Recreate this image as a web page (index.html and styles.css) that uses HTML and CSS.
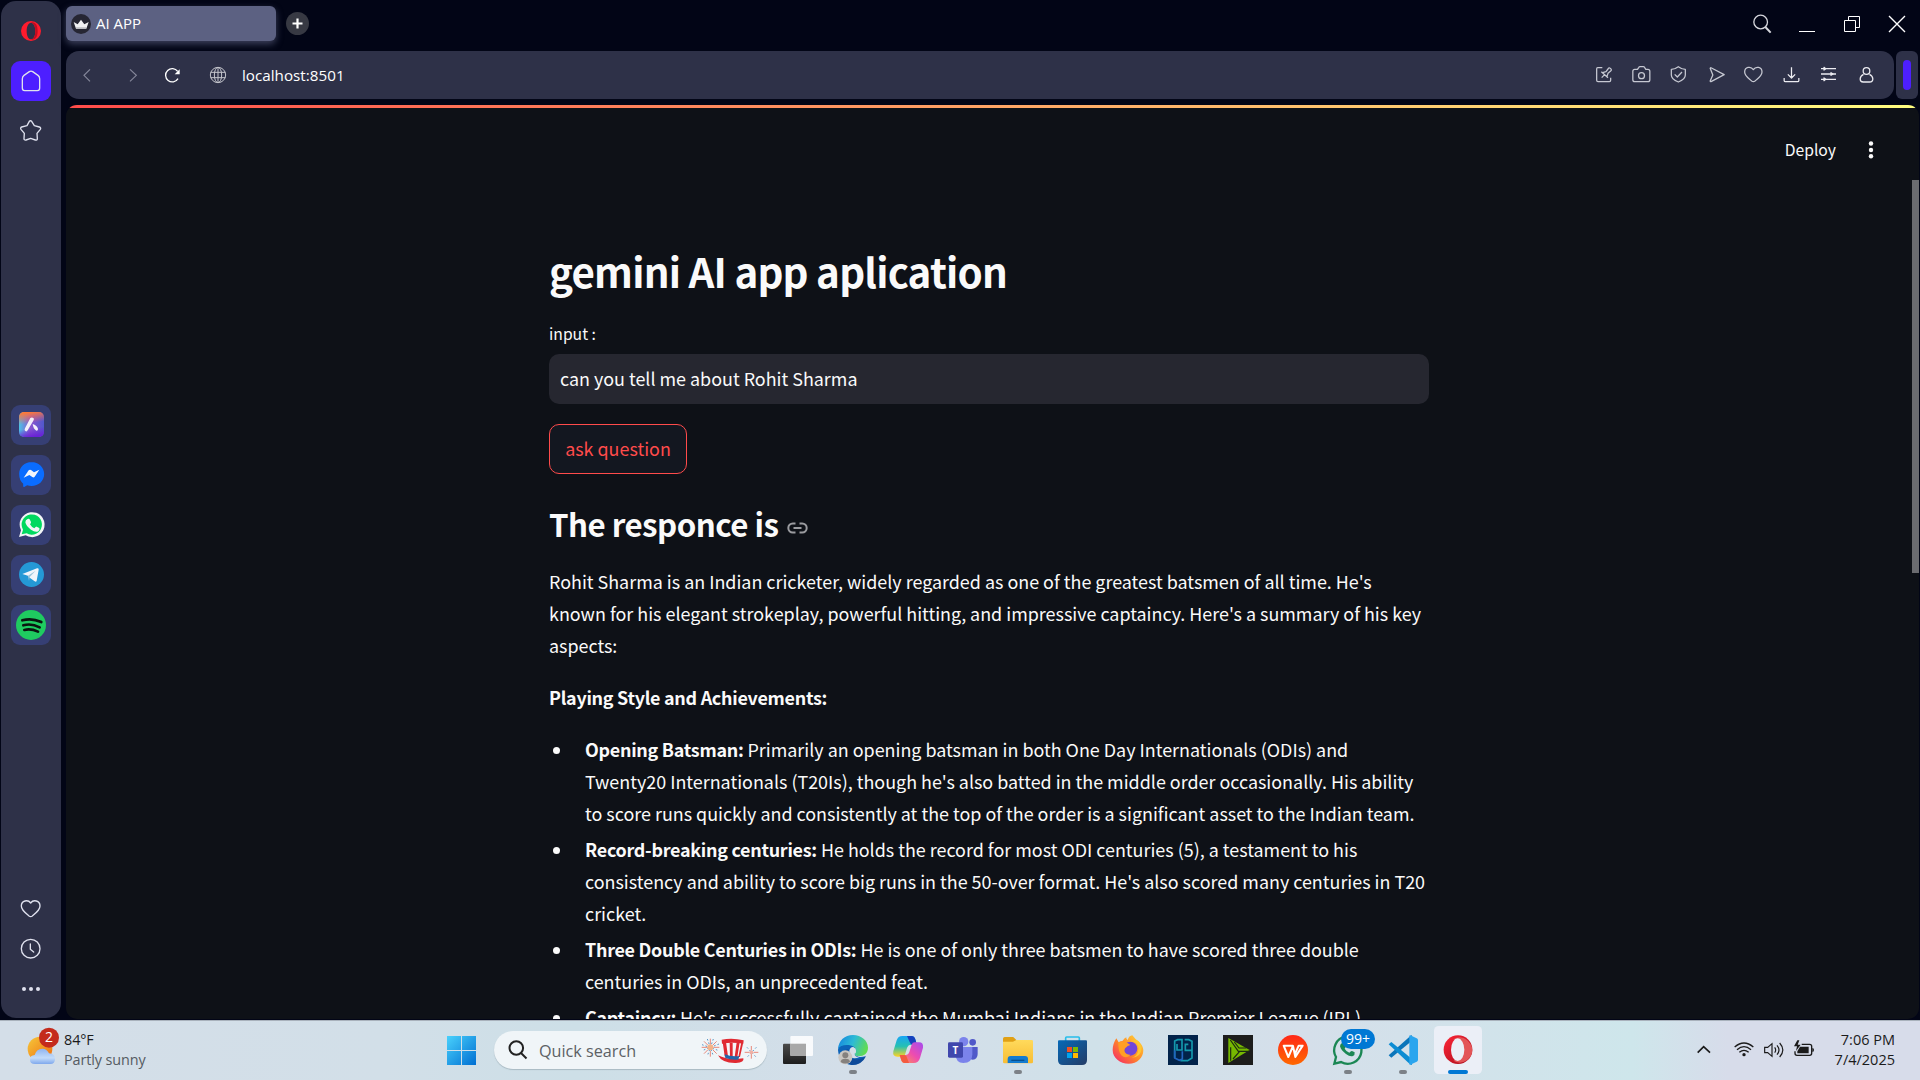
FILE: index.html
```html
<!DOCTYPE html>
<html lang="en">
<head>
<meta charset="utf-8">
<title>AI APP</title>
<link rel="stylesheet" href="styles.css">
</head>
<body>
<div class="browser">
  <nav class="sidebar">
    <svg class="side-icon" viewBox="33 33 120 120"><path fill="#ff1b2d" fill-rule="evenodd" d="M93 63a30 30 0 1 0 0 60a30 30 0 1 0 0-60zM93 68c8 0 13 11 13 25s-5 25-13 25s-13-11-13-25s5-25 13-25z"/><path fill="#c00d20" d="M93 68c9-4 20 3 20 25s-11 29-20 25c8 0 13-11 13-25s-5-25-13-25z"/></svg>
    <svg class="side-icon home" viewBox="33 183 120 120"><path d="M67 236c0-5 2-8 5-10l16-11c3-2 7-2 10 0l16 11c3 2 5 5 5 10v28c0 5-2 8-7 8H74c-5 0-7-3-7-8z"/></svg>
    <svg class="side-icon" viewBox="33 333 120 120"><path d="M88 364c2-2 5-2 7 0l8 13l15 4c4 1 5 4 3 7l-10 12l1 16c0 4-3 5-6 4l-14-5l-14 5c-4 1-6-1-6-4l1-16l-10-12c-2-3-1-6 2-7l16-4z"/></svg>
    <div class="side-apps">
      <svg class="side-icon tile" viewBox="33 45 120 120"><defs><linearGradient id="aria" x1="0" y1="0" x2="1" y2="0"><stop offset="0" stop-color="#4cc3e6"/><stop offset=".45" stop-color="#8a55d0"/><stop offset="1" stop-color="#5058cc"/></linearGradient><linearGradient id="ariatop" x1=".4" y1="0" x2=".55" y2="1"><stop offset="0" stop-color="#ff7a35"/><stop offset=".45" stop-color="#ff6a50" stop-opacity="0"/><stop offset=".65" stop-color="#6a20d8" stop-opacity="0"/><stop offset="1" stop-color="#6a20d8"/></linearGradient></defs><rect class="solid" x="57" y="66" width="75" height="75" rx="15" fill="url(#aria)"/><rect class="solid" x="57" y="66" width="75" height="75" rx="15" fill="url(#ariatop)"/><path class="solid" fill="#f4f0fa" d="M91 84q5-4 10 1q2 3-1 7l-17 29q-3 5-7 2q-4-2-1-8zM98 102q12 3 16 14q1 6-5 6q-9-5-11-20z"/></svg>
      <svg class="side-icon tile" viewBox="33 45 120 120"><path class="solid" fill="#0a6cff" d="M94.500 66c21 0 38 15 38 36s-17 36-38 36q-7 0-13-2l-9 5q-3 1-3-3v-7q-12-10-12-29c0-21 16-36 37.500-36z"/><path class="solid" fill="#f2f5fb" d="M71 113l15-22q3-3 7-1l9 7l16-8l-14 21q-3 4-7 1l-9-6z"/></svg>
      <svg class="side-icon tile" viewBox="33 45 120 120"><path class="solid" fill="#f2f5f7" d="M57 141l6-20a37.500 37.500 0 1 1 14 15z"/><path class="solid" fill="#00d95f" d="M65 133l4-14a30.500 30.500 0 1 1 11 11z"/><path class="solid" fill="#f2f5f7" d="M83 87q5-2 7 3l3 6q1 3-3 7q5 9 13 12q5-6 7-5l8 4q2 8-6 11q-8 2-19-6q-15-11-17-22q0-7 7-10z"/></svg>
      <svg class="side-icon tile" viewBox="33 45 120 120"><circle class="solid" cx="94.500" cy="103.500" r="37.500" fill="#2499d6"/><path class="solid" fill="#f2f5fb" d="M67 102l44-17q6-2 5 4l-6 33q-1 5-6 2l-15-11l-5-6z"/><path class="solid" fill="#9fc6dc" d="M84 107l23-15l-18 19l-2 12z"/></svg>
      <svg class="side-icon tile" viewBox="33 45 120 120"><circle class="solid" cx="93" cy="105" r="45" fill="#1fcb60"/><path d="M67 91q28-8 57 5M70 106q24-7 49 6M73 120q20-5 41 5" stroke="#0a1510" stroke-width="8"/></svg>
    </div>
    <div class="side-tools">
      <svg class="side-icon" viewBox="33 26 120 120"><path d="M92 68c-8-11-28-8-28 9c0 11 8 17 23 30q5 4 10 0c15-13 23-19 23-30c0-17-20-20-28-9z"/></svg>
      <svg class="side-icon" viewBox="33 147 120 120"><circle cx="92" cy="206" r="28"/><path d="M91 192v16l10 8"/></svg>
      <svg class="side-icon" viewBox="33 267 120 120"><g fill="#dfe1ee" stroke="none"><circle cx="72" cy="327" r="6"/><circle cx="93" cy="327" r="6"/><circle cx="114" cy="327" r="6"/></g></svg>
    </div>
  </nav>

  <div class="window">
    <header class="tabs">
      <div class="tab"><svg viewBox="213 42 60 60"><circle cx="243" cy="72" r="30" fill="#262633"/><path fill="#f1f1f3" d="M221 66l12 7l10-14l10 14l13-7l-7 20h-31z"/><path fill="#bdbdc2" d="M228 82h31l-1 5h-29z"/></svg><span>AI APP</span></div>
      <svg class="new-tab" viewBox="0 0 23 23"><circle cx="11.500" cy="11.500" r="11.500" fill="#373943"/><path d="M11.500 6.500v10M6.500 11.500h10" stroke="#fff" stroke-width="2.200"/></svg>
      <div class="controls">
        <svg viewBox="540 0 135 144"><circle cx="602" cy="66" r="20.500"/><path d="M616 81l16 17" stroke-width="6"/></svg>
        <svg viewBox="675 0 135 144"><path stroke="#fff" d="M717 94.500h48"/></svg>
        <svg viewBox="810 0 135 144"><path stroke="#fff" d="M853.500 61.500h33v33h-33zM865.500 61v-11.500h33v33H887"/></svg>
        <svg viewBox="945 0 135 144"><path stroke="#fff" stroke-width="4" d="M987 48l48 48M1035 48l-48 48"/></svg>
      </div>
    </header>

    <div class="toolbar-row">
      <div class="toolbar">
        <svg class="nav-icon dim" viewBox="210 153 114 144"><path d="M270 208l-18 18l18 18"/></svg>
        <svg class="nav-icon dim forward" viewBox="345 153 114 144"><path d="M390 208l19 18l-19 18"/></svg>
        <svg class="nav-icon reload" viewBox="459 153 114 144"><path d="M534 236a20 20 0 1 1-1-22" stroke-width="4"/><path fill="#fff" stroke="none" d="M539 208v15h-15z"/></svg>
        <svg class="nav-icon globe" viewBox="597 153 114 144"><circle cx="654" cy="225" r="23"/><ellipse cx="654" cy="225" rx="11" ry="23"/><path d="M632 217h44M632 233h44M654 202v46"/></svg>
        <span class="address">localhost:8501</span>
        <div class="actions">
          <svg viewBox="75 153 112.5 144"><path d="M127 203h-14q-3 0-3 4v34q0 4 4 4h34q4 0 4-4v-8M125 233l9-9M124 215l20 18M128 218l10-3l6-8q3-6 7-2l1 1q4 4 0 7l-8 7l-3 9"/></svg>
          <svg viewBox="187.5 153 112.5 144"><path d="M217 214q0-6 6-6h8l4-6q1-2 4-2h9q3 0 4 2l4 6h6q6 0 6 6v25q0 6-6 6h-39q-6 0-6-6z"/><circle cx="243" cy="227" r="9"/></svg>
          <svg viewBox="300 153 112.5 144"><path d="M355 200q11 8 21 8v17q0 13-21 21q-21-8-21-21v-17q10 0 21-8zM344 223l8 8l14-15"/></svg>
          <svg viewBox="412.5 153 112.5 144"><path d="M449 205q0-3 4-1l38 20l-38 20q-4 2-4-1l8-18z"/></svg>
          <svg viewBox="525 153 112.5 144"><path d="M580 209c-8-12-26-8-26 7c0 12 12 19 21 27q5 4 10 0c9-8 21-15 21-27c0-15-18-19-26-7z"/></svg>
          <svg class="bright" viewBox="637.5 153 112.5 144"><path d="M693 202v31M682 223l11 11l11-11M671 234v8q0 3 4 3h36q4 0 4-3v-8"/></svg>
          <svg class="bright" viewBox="750 153 112.5 144"><path d="M783 206h45M783 222h45M783 238h45"/><path d="M792 202v8l5-4zM813 218v8l6-4zM792 234v8l5-4z" fill="#e5e5eb"/></svg>
          <svg class="bright" viewBox="862.5 153 112.5 144"><circle cx="918" cy="213" r="10"/><path d="M909 223q-10 5-10 14q0 9 9 9h19q10 0 10-9q0-9-10-14"/></svg>
        </div>
      </div>
      <div class="panel-toggle"><div class="panel-mark"></div></div>
    </div>

    <div class="page">
      <div class="decoration"></div>
      <div class="app-header"><span>Deploy</span><svg viewBox="0 0 6 20"><circle cx="3" cy="3.500" r="2.200"/><circle cx="3" cy="10" r="2.200"/><circle cx="3" cy="16.300" r="2.200"/></svg></div>
      <div class="scroll-thumb"></div>
      <main class="content">
        <h1>gemini AI app aplication</h1>
        <label class="label">input :</label>
        <div class="field">can you tell me about Rohit Sharma</div>
        <button class="ask">ask question</button>
        <h2><span>The responce is</span><svg viewBox="0 0 22 12"><path d="M8.500 1.500H5.800a4.500 4.500 0 0 0 0 9h2.700M12.500 1.500h2.700a4.500 4.500 0 0 1 0 9h-2.700M6.500 6h8"/></svg></h2>
        <p>Rohit Sharma is an Indian cricketer, widely regarded as one of the greatest batsmen of all time. He's<br>known for his elegant strokeplay, powerful hitting, and impressive captaincy. Here's a summary of his key<br>aspects:</p>
        <p><strong>Playing Style and Achievements:</strong></p>
        <ul>
          <li><strong>Opening Batsman:</strong> Primarily an opening batsman in both One Day Internationals (ODIs) and<br>Twenty20 Internationals (T20Is), though he's also batted in the middle order occasionally. His ability<br>to score runs quickly and consistently at the top of the order is a significant asset to the Indian team.</li>
          <li><strong>Record-breaking centuries:</strong> He holds the record for most ODI centuries (5), a testament to his<br>consistency and ability to score big runs in the 50-over format. He's also scored many centuries in T20<br>cricket.</li>
          <li><strong>Three Double Centuries in ODIs:</strong> He is one of only three batsmen to have scored three double<br>centuries in ODIs, an unprecedented feat.</li>
          <li><strong>Captaincy:</strong> He's successfully captained the Mumbai Indians in the Indian Premier League (IPL)</li>
        </ul>
      </main>
    </div>
  </div>
</div>

<footer class="taskbar">
  <div class="weather">
    <svg viewBox="78 438 105 120"><defs><linearGradient id="sun" x1="0" y1="0" x2="1" y2="1"><stop offset="0" stop-color="#f5c83a"/><stop offset="1" stop-color="#f06a10"/></linearGradient><linearGradient id="cloud" x1="0" y1="0" x2="0" y2="1"><stop offset="0" stop-color="#8fb4f0"/><stop offset=".6" stop-color="#c3dcfa"/><stop offset="1" stop-color="#7fa8ec"/></linearGradient></defs><circle cx="120" cy="507" r="37" fill="url(#sun)"/><path fill="url(#cloud)" d="M105 552q-15 0-15-13q0-13 14-14q6-19 23-19q14 0 20 14q18 2 18 17q0 15-14 15z"/><circle cx="147" cy="473" r="30" fill="#c42b1c"/></svg>
    <span class="count">2</span>
    <div class="forecast"><span>84°F</span><span class="muted">Partly sunny</span></div>
  </div>
  <div class="dock">
    <svg class="dock-icon start" viewBox="12 30 165 180"><defs><linearGradient id="win" x1="0" y1="0" x2="1" y2="1"><stop offset="0" stop-color="#49d1fc"/><stop offset="1" stop-color="#006fd2"/></linearGradient></defs><path fill="url(#win)" d="M51 78h42v42H51zM96 78h42v42H96zM51 123h42v42H51zM96 123h42v42H96z"/></svg>
    <div class="search">
      <svg class="lens" viewBox="0 0 20 20"><circle cx="8.300" cy="8" r="6.800"/><path d="M13 13l5.500 5.500"/></svg>
      <span>Quick search</span>
      <svg class="party" viewBox="812 78 180 84"><g fill="none" stroke-width="2.500"><path stroke="#e57261" d="M843 86v18M843 122v18M817 112h18M852 112h18M824 94l12 12M850 119l12 12M862 94l-12 12M836 119l-12 12M966 108v12M966 132v14M946 127h14M973 127h14"/><path stroke="#3a86bd" stroke-dasharray="5 6" d="M834 87l18 51M818 104l51 18M869 102l-51 20M852 87l-18 51M953 112l28 30M981 112l-28 30"/></g><circle cx="843" cy="112" r="9" fill="#f3b48a"/><circle cx="966" cy="127" r="6" fill="#efb0a5"/><path fill="#f5f5f7" d="M878 91q30-8 64 0l-12 58l-46-4z"/><path fill="#e02a32" d="M877 89q32-7 66 2l-1 10q-32-6-64 0zM880 97h10l6 42h-10zM901 97h9v44h-8zM922 97h9l-7 44h-8zM936 97h6l-10 44h-5zM866 136q30 16 76 9q4 12-22 14q-42 1-54-23z"/><path fill="#2465a8" d="M886 133q20 8 44 5l-3 11q-21 2-39-5z"/></svg>
    </div>
    <svg class="dock-icon" viewBox="0 30 165 180"><defs><linearGradient id="tv" x1="0" y1="0" x2="0" y2="1"><stop offset="0" stop-color="#4b4b4b"/><stop offset="1" stop-color="#1d1d1d"/></linearGradient></defs><rect x="39" y="101" width="69" height="61" rx="3" fill="url(#tv)"/><rect x="61" y="78" width="68" height="60" rx="3" fill="#fff" opacity=".85"/><path fill="#a8a8a8" d="M61 101h47v37H64q-3 0-3-3z"/></svg>
    <svg class="dock-icon" viewBox="165 30 165 180"><defs><linearGradient id="edge" x1="0" y1=".2" x2="1" y2=".5"><stop offset="0" stop-color="#1687df"/><stop offset=".5" stop-color="#2dbbd5"/><stop offset="1" stop-color="#61dc51"/></linearGradient></defs><path fill="#0d63b8" d="M204 120q2-26 40-26q20 4 10 36q4 16 33 9q-16 26-42 26q-38-4-41-45z"/><path fill="#0f4b9b" d="M235 118q-2 32 28 30q14-1 25-9q-13 27-43 26q-30-8-28-32q3-13 18-15z"/><path fill="url(#edge)" d="M204 117c2-26 20-42 45-42s45 17 45 38c0 18-13 25-27 25q-14 0-13-6q4-3 4-10q0-13-22-17q-24-2-32 12z"/><path fill="#d4dfe8" d="M238 122q3-12 12-11q8 4 8 11q0 5-4 9q0 10 14 10q-20 10-28-5q-3-7-2-14z"/><circle cx="226" cy="142" r="21" fill="#c9c6c2"/><circle cx="226" cy="136" r="9" fill="#85817e"/><path fill="#85817e" d="M212 156q0-10 14-10t14 10q-14 9-28 0z"/><rect class="running" x="237" y="180" width="24" height="12" rx="6"/></svg>
    <svg class="dock-icon" viewBox="330 30 165 180"><defs><linearGradient id="cpa" x1="0" y1="0" x2="0" y2="1"><stop offset="0" stop-color="#18a5f5"/><stop offset=".5" stop-color="#24c0b3"/><stop offset="1" stop-color="#ffd423"/></linearGradient><linearGradient id="cpb" x1="1" y1="0" x2="0" y2="1"><stop offset="0" stop-color="#a44cf0"/><stop offset=".5" stop-color="#ed4cb0"/><stop offset="1" stop-color="#ff9c4a"/></linearGradient></defs><path fill="url(#cpa)" d="M397 78h27q10 0 13 13l4 13h-17q-10 0-13 10l-6 20q-2 6-9 6h-14q-15 0-12-16l10-33q4-13 17-13z"/><path fill="#1641bd" d="M411 78h14q9 0 12 13l3 13h-13q-5 0-8-8z"/><path fill="url(#cpb)" d="M431 159h-27q-10 0-11-11l-4-13h17q9 0 12-9l7-22q2-7 9-7h13q14 0 12 16l-9 31q-4 15-19 15z"/><path fill="#f35b40" d="M417 159h-13q-8 0-11-11l-4-13h14q7 0 8 8z"/></svg>
    <svg class="dock-icon" viewBox="495 30 165 180"><circle cx="581" cy="95" r="14" fill="#7b83eb"/><circle cx="608" cy="97" r="10" fill="#5059c9"/><path fill="#5059c9" d="M592 111h31v21q0 16-15 17q-9 0-16-7z"/><path fill="#7b83eb" d="M557 111h50v22q0 26-27 26q-23 0-23-26z"/><rect x="534" y="97" width="45" height="46" rx="4" fill="#4047ad"/><text class="teams-letter" x="556.500" y="132" text-anchor="middle">T</text></svg>
    <svg class="dock-icon" viewBox="660 30 165 180"><defs><linearGradient id="folder" x1="0" y1="0" x2="0" y2="1"><stop offset="0" stop-color="#ffda5c"/><stop offset="1" stop-color="#f8bd34"/></linearGradient></defs><path fill="#e0a015" d="M699 86q0-5 5-5h24q3 0 5 3l6 6h45v20h-85z"/><path fill="url(#folder)" d="M699 95h30l10-5h46q4 0 4 4v62q0 4-4 4h-82q-4 0-4-4z"/><path fill="#137bd0" d="M713 159v-12q0-9 9-9h43q9 0 9 9v12z"/><path d="M724 151h39" stroke="#07508f" stroke-width="4"/><rect class="running" x="732" y="180" width="24" height="12" rx="6"/></svg>
    <svg class="dock-icon" viewBox="825 30 165 180"><defs><linearGradient id="store" x1="0" y1="0" x2="1" y2="1"><stop offset="0" stop-color="#0669b8"/><stop offset="1" stop-color="#243c66"/></linearGradient></defs><path d="M887 95V84q0-3 3-3h35q3 0 3 3v11" fill="none" stroke="#27bdea" stroke-width="5"/><path fill="url(#store)" d="M864 94q0-3 3-3h81q3 0 3 3v56q0 15-15 15h-57q-15 0-15-15z"/><path fill="#f25022" d="M891 111h15v15h-15z"/><path fill="#7fba00" d="M909 111h15v15h-15z"/><path fill="#00a4ef" d="M891 129h15v15h-15z"/><path fill="#ffb900" d="M909 129h15v15h-15z"/></svg>
    <svg class="dock-icon" viewBox="993 31 165 180"><defs><linearGradient id="fox" x1="1" y1="0" x2="0" y2="1"><stop offset="0" stop-color="#ffdc3e"/><stop offset=".5" stop-color="#ff8a27"/><stop offset="1" stop-color="#f41c70"/></linearGradient></defs><path fill="url(#fox)" d="M1042 86l7 12q5-4 11-4q8-10 12-11q-1 5 4 8q4-13 14-14q10 14 20 19q12 12 13 25c0 24-18 41-44 41s-48-17-48-41q0-18 11-35z"/><circle cx="1084" cy="117" r="21" fill="#7246d8"/><path fill="#ff9f24" d="M1048 98q13-3 24 0l12 8q-10 2-12 7q-7 4-5 13q5 10 18 9q-15 14-28 2q-10-12-9-39z"/><path fill="#ffc72e" d="M1080 95q25-4 29 20q-2 26-22 29q30-1 31-30q-4-16-15-23z"/></svg>
    <svg class="dock-icon" viewBox="75 30 165 180"><path fill="#02234a" d="M114 75h90v90h-90z"/><g fill="none" stroke="#1499ad" stroke-width="5"><path d="M134 143V93l9-4h13v31h-15v-18M164 89h12l10 5v50l-13 8h-22M186 121h-20v-18h9" /><path stroke="#2165bf" d="M134 121v23l14 7l9-4v-23"/></g></svg>
    <svg class="dock-icon" viewBox="240 30 165 180"><path fill="#1d1d1c" d="M279 75h90v90h-90z"/><path fill="#76b900" d="M295 84l64 36l-64 39z"/><path d="M301 90l24 34h32M313 96l14 18h22M302 112v40M309 147l20-23" stroke="#1d2b12" stroke-width="3.500" fill="none"/></svg>
    <svg class="dock-icon" viewBox="405 30 165 180"><defs><linearGradient id="wps" x1="0" y1="0" x2="0" y2="1"><stop offset="0" stop-color="#ff2818"/><stop offset="1" stop-color="#ff6800"/></linearGradient></defs><circle cx="489" cy="120" r="45" fill="url(#wps)"/><path d="M489 107h-28l14 34l14-33l7 33l22-34h-12l-11 25" fill="none" stroke="#fff" stroke-width="6" stroke-linejoin="round"/></svg>
    <div class="badged">
      <svg class="dock-icon" viewBox="570 30 165 180"><path fill="none" stroke="#1b8754" stroke-width="7" d="M613 161l5-20a41 41 0 1 1 15 15z"/><path fill="#1b8754" d="M637 98q5-2 7 3l3 8q1 3-3 7q5 9 14 12q5-6 8-5l8 4q1 8-5 11q-9 3-21-6q-15-11-18-23q0-7 7-11z"/><rect class="running" x="642" y="180" width="24" height="12" rx="6"/></svg>
      <span class="badge">99+</span>
    </div>
    <svg class="dock-icon" viewBox="735 30 165 180"><path fill="#0a75ba" d="M776 136l8 7l62-51V76l-4 1z"/><path fill="#0b8cd3" d="M776 103l8-7l62 51v18l-6-2z"/><path fill="#2aa5ee" d="M841 76l19 9q4 2 4 6v58q0 4-4 6l-19 9q-3 1-3-3V79q0-4 3-3z"/><rect class="running" x="807" y="180" width="24" height="12" rx="6"/></svg>
    <svg class="dock-icon" viewBox="900 30 165 180"><defs><linearGradient id="opera" x1="0" y1="0" x2="1" y2="1"><stop offset="0" stop-color="#ff2638"/><stop offset="1" stop-color="#a40b1a"/></linearGradient></defs><rect x="912" y="48" width="144" height="144" rx="14" fill="#ebeff7"/><circle cx="984" cy="119" r="43" fill="url(#opera)"/><path fill="#e35457" d="M969 88q24-14 42 2q16 14 16 30q0 18-16 31q-20 14-41 1q28-8 28-32q0-25-29-32z"/><ellipse cx="983" cy="119" rx="20" ry="34" fill="#ebeff7"/><rect x="954" y="180" width="60" height="12" rx="6" fill="#0078d4"/></svg>
  </div>
  <div class="tray">
    <svg class="tray-icons" viewBox="90 75 390 90"><path d="M113 128l18-18l19 18" stroke-width="5"/><path d="M224 111q28-24 56 0M231 119q21-18 42 0M238 127q14-12 28 0" stroke-width="4"/><circle cx="252" cy="134" r="5" fill="#1b1b1b" stroke="none"/><path d="M314 112h9l13-11v38l-13-11h-9zM344 112q6 8 0 16M351 106q12 14 0 28M359 99q19 21 0 42" stroke-width="3.500"/><path d="M425 103h24q6 0 6 6v21q0 6-6 6h-38q-6 0-6-6v-6" stroke-width="4"/><path fill="#1b1b1b" stroke="none" d="M420 110h26v20h-34v-6zM457 114q5 0 5 6t-5 6zM412 91l-10 18h9l-3 14l14-19h-9l5-13z"/></svg>
    <div class="clock"><span>7:06 PM</span><span>7/4/2025</span></div>
  </div>
</footer>
</body>
</html>
```
FILE: styles.css
```css
* { box-sizing: border-box; }
body { margin: 0; width: 1920px; height: 1080px; overflow: hidden; background: #020516; font-family: "Open Sans", "Noto Sans", sans-serif; display: flex; flex-direction: column; }
svg { display: block; flex: none; }
.browser { height: 1020px; display: flex; gap: 5px; padding-left: 1px; overflow: hidden; }

.sidebar { width: 60px; height: 1017px; margin-top: 1px; border-radius: 15px; background: #2e3148; padding: 10px 10px 9px; display: flex; flex-direction: column; gap: 10px; }
.side-icon { width: 40px; height: 40px; fill: none; stroke: #dfe1ee; stroke-width: 4; stroke-linecap: round; stroke-linejoin: round; }
.sidebar > .side-icon:first-child, .side-icon .solid { stroke: none; }
.home { background: #4d1fff; border-radius: 9px; }
.tile { background: #363f74; border-radius: 9px; }
.side-apps { margin-top: 244px; display: flex; flex-direction: column; gap: 10px; }
.side-tools { margin-top: auto; display: flex; flex-direction: column; }

.window { width: 1854px; display: flex; flex-direction: column; }
.tabs { height: 51px; display: flex; align-items: flex-start; }
.tab { width: 210px; height: 35px; margin-top: 6px; padding-left: 5px; border-radius: 6px; background: #5c6182; color: #fff; display: flex; align-items: center; gap: 5px; font-size: 15px; line-height: 33px; box-shadow: 0 3px 7px rgba(100, 105, 140, .6); }
.tab span { padding-bottom: 1px; }
.tab svg { width: 20px; height: 20px; }
.new-tab { width: 23px; height: 23px; margin: 12px 0 0 10px; }
.controls { margin-left: auto; display: flex; }
.controls svg { width: 45px; height: 48px; fill: none; stroke: #d5d6dc; stroke-width: 4; }
.controls svg + svg { stroke-width: 3; }

.toolbar-row { height: 48px; display: flex; gap: 2px; }
.toolbar { width: 1828px; border-radius: 13px; background: #2e3148; display: flex; align-items: center; padding: 0 9px 0 4px; }
.nav-icon { width: 38px; height: 48px; fill: none; stroke: #fff; stroke-width: 3; }
.dim { stroke: #85879a; stroke-width: 3.500; }
.forward { margin-left: 7px; }
.globe { margin-left: 8px; stroke: #c4c5cc; }
.address { margin-left: 5px; padding-bottom: 1px; color: #fff; font-size: 15.200px; letter-spacing: .02px; }
.actions { margin-left: auto; display: flex; }
.actions svg { width: 37.5px; height: 48px; fill: none; stroke: #c6c8d2; stroke-width: 3.800; stroke-linejoin: round; }
.actions .bright { stroke: #ececf1; }
.panel-toggle { width: 22px; border-radius: 6px; background: #2e3148; display: flex; align-items: center; justify-content: center; }
.panel-mark { width: 8px; height: 30px; border-radius: 4px; background: #4d1fff; }

.page { position: relative; margin-top: 6px; height: 914px; width: 1853px; border-radius: 11px; overflow: hidden; background: #0e1117; color: #fafafa; font-family: "Noto Sans CJK SC", "Noto Sans", sans-serif; }
.decoration { height: 3px; background: linear-gradient(90deg, #ff4b4b, #fffd80); }
.app-header { height: 75px; padding: 9px 45px 0 0; display: flex; justify-content: flex-end; align-items: center; gap: 32px; font-size: 15.700px; line-height: 24px; }
.app-header svg { width: 6px; height: 20px; fill: #fafafa; }
.scroll-thumb { position: absolute; right: 0; top: 75px; width: 7px; height: 393px; background: #6b6c70; }
.content { width: 880px; margin-left: 483px; padding-top: 55px; font-size: 17.910px; line-height: 32px; white-space: nowrap; }
h1 { margin: 0; font-size: 40.300px; line-height: 66px; font-weight: 700; letter-spacing: -.79px; }
.label { display: block; margin-top: 17px; font-size: 15.700px; line-height: 26px; }
.field { margin-top: 7px; height: 50px; padding: 0 11px; border-radius: 10px; background: #262730; line-height: 48px; }
.ask { display: block; margin-top: 20px; width: 138px; height: 50px; padding: 0 0 2px; border: 1px solid #ff4b4b; border-radius: 10px; background: #131720; color: #ff4b4b; font: inherit; }
h2 { margin: 28px 0 0; display: flex; align-items: center; gap: 9px; font-size: 31.300px; line-height: 44px; font-weight: 700; letter-spacing: -.54px; }
h2 svg { width: 22px; height: 12px; margin-top: 7px; fill: none; stroke: #9a9b9f; stroke-width: 2; }
p { margin: 20px 0 0; }
h2 + p { margin-top: 19px; }
strong { letter-spacing: -.26px; }
ul { margin: 20px 0 0; padding: 0; list-style: none; }
li { margin: 0 0 4px 36px; }
li::before { content: ""; display: inline-block; width: 7px; height: 7px; margin: 0 25px 0 -32px; border-radius: 50%; background: #fafafa; vertical-align: 3px; }

.taskbar { height: 60px; border-top: 1px solid #a9b2bc; background: linear-gradient(90deg, #d4dee8 0, #d2dfe8 20%, #cddfe7 30%, #d4dee9 46%, #d0e1e9 57%, #d5dfea 68%, #cee6eb 85%, #d7dcea 90%, #d7dcea 100%); display: flex; color: #1b1b1b; }
.weather { position: relative; width: 434px; padding-left: 26px; display: flex; gap: 3px; }
.weather svg { width: 35px; height: 40px; margin-top: 5px; }
.count { position: absolute; left: 39px; top: 6px; width: 20px; text-align: center; color: #fff; font-size: 14px; line-height: 20px; }
.forecast { display: flex; flex-direction: column; padding-top: 9px; font-size: 14.400px; line-height: 20px; letter-spacing: -.1px; }
.muted { color: #555b62; }
.dock { display: flex; align-items: center; height: 60px; margin-top: -1px; }
.dock-icon { width: 55px; height: 60px; }
.running { fill: #7c8187; }
.search { width: 273px; height: 38px; margin: 0 3px 0 5px; padding: 0 7px 0 14px; border-radius: 19px; background: #f0f5f8; box-shadow: 0 1px 1px #a9bac3; display: flex; align-items: center; color: #5c6165; font-size: 16.200px; }
.search span { padding-top: 1px; }
.search .lens { width: 20px; height: 20px; margin-right: 11px; fill: none; stroke: #222; stroke-width: 2; }
.search .party { width: 60px; height: 28px; margin-left: auto; }
.teams-letter { font: 700 30px "Open Sans", sans-serif; fill: #fff; }
.badged { position: relative; }
.badge { position: absolute; left: 21px; top: 9px; width: 34px; height: 20px; border-radius: 10px; background: #0078d4; color: #fff; text-align: center; font-size: 14px; line-height: 20px; }
.tray { margin-left: auto; padding-right: 25px; display: flex; }
.tray-icons { width: 130px; height: 30px; margin: 14px 10px 0 0; fill: none; stroke: #1b1b1b; }
.clock { width: 65px; display: flex; flex-direction: column; text-align: right; padding-top: 9px; font-size: 14.500px; line-height: 20px; }
```
